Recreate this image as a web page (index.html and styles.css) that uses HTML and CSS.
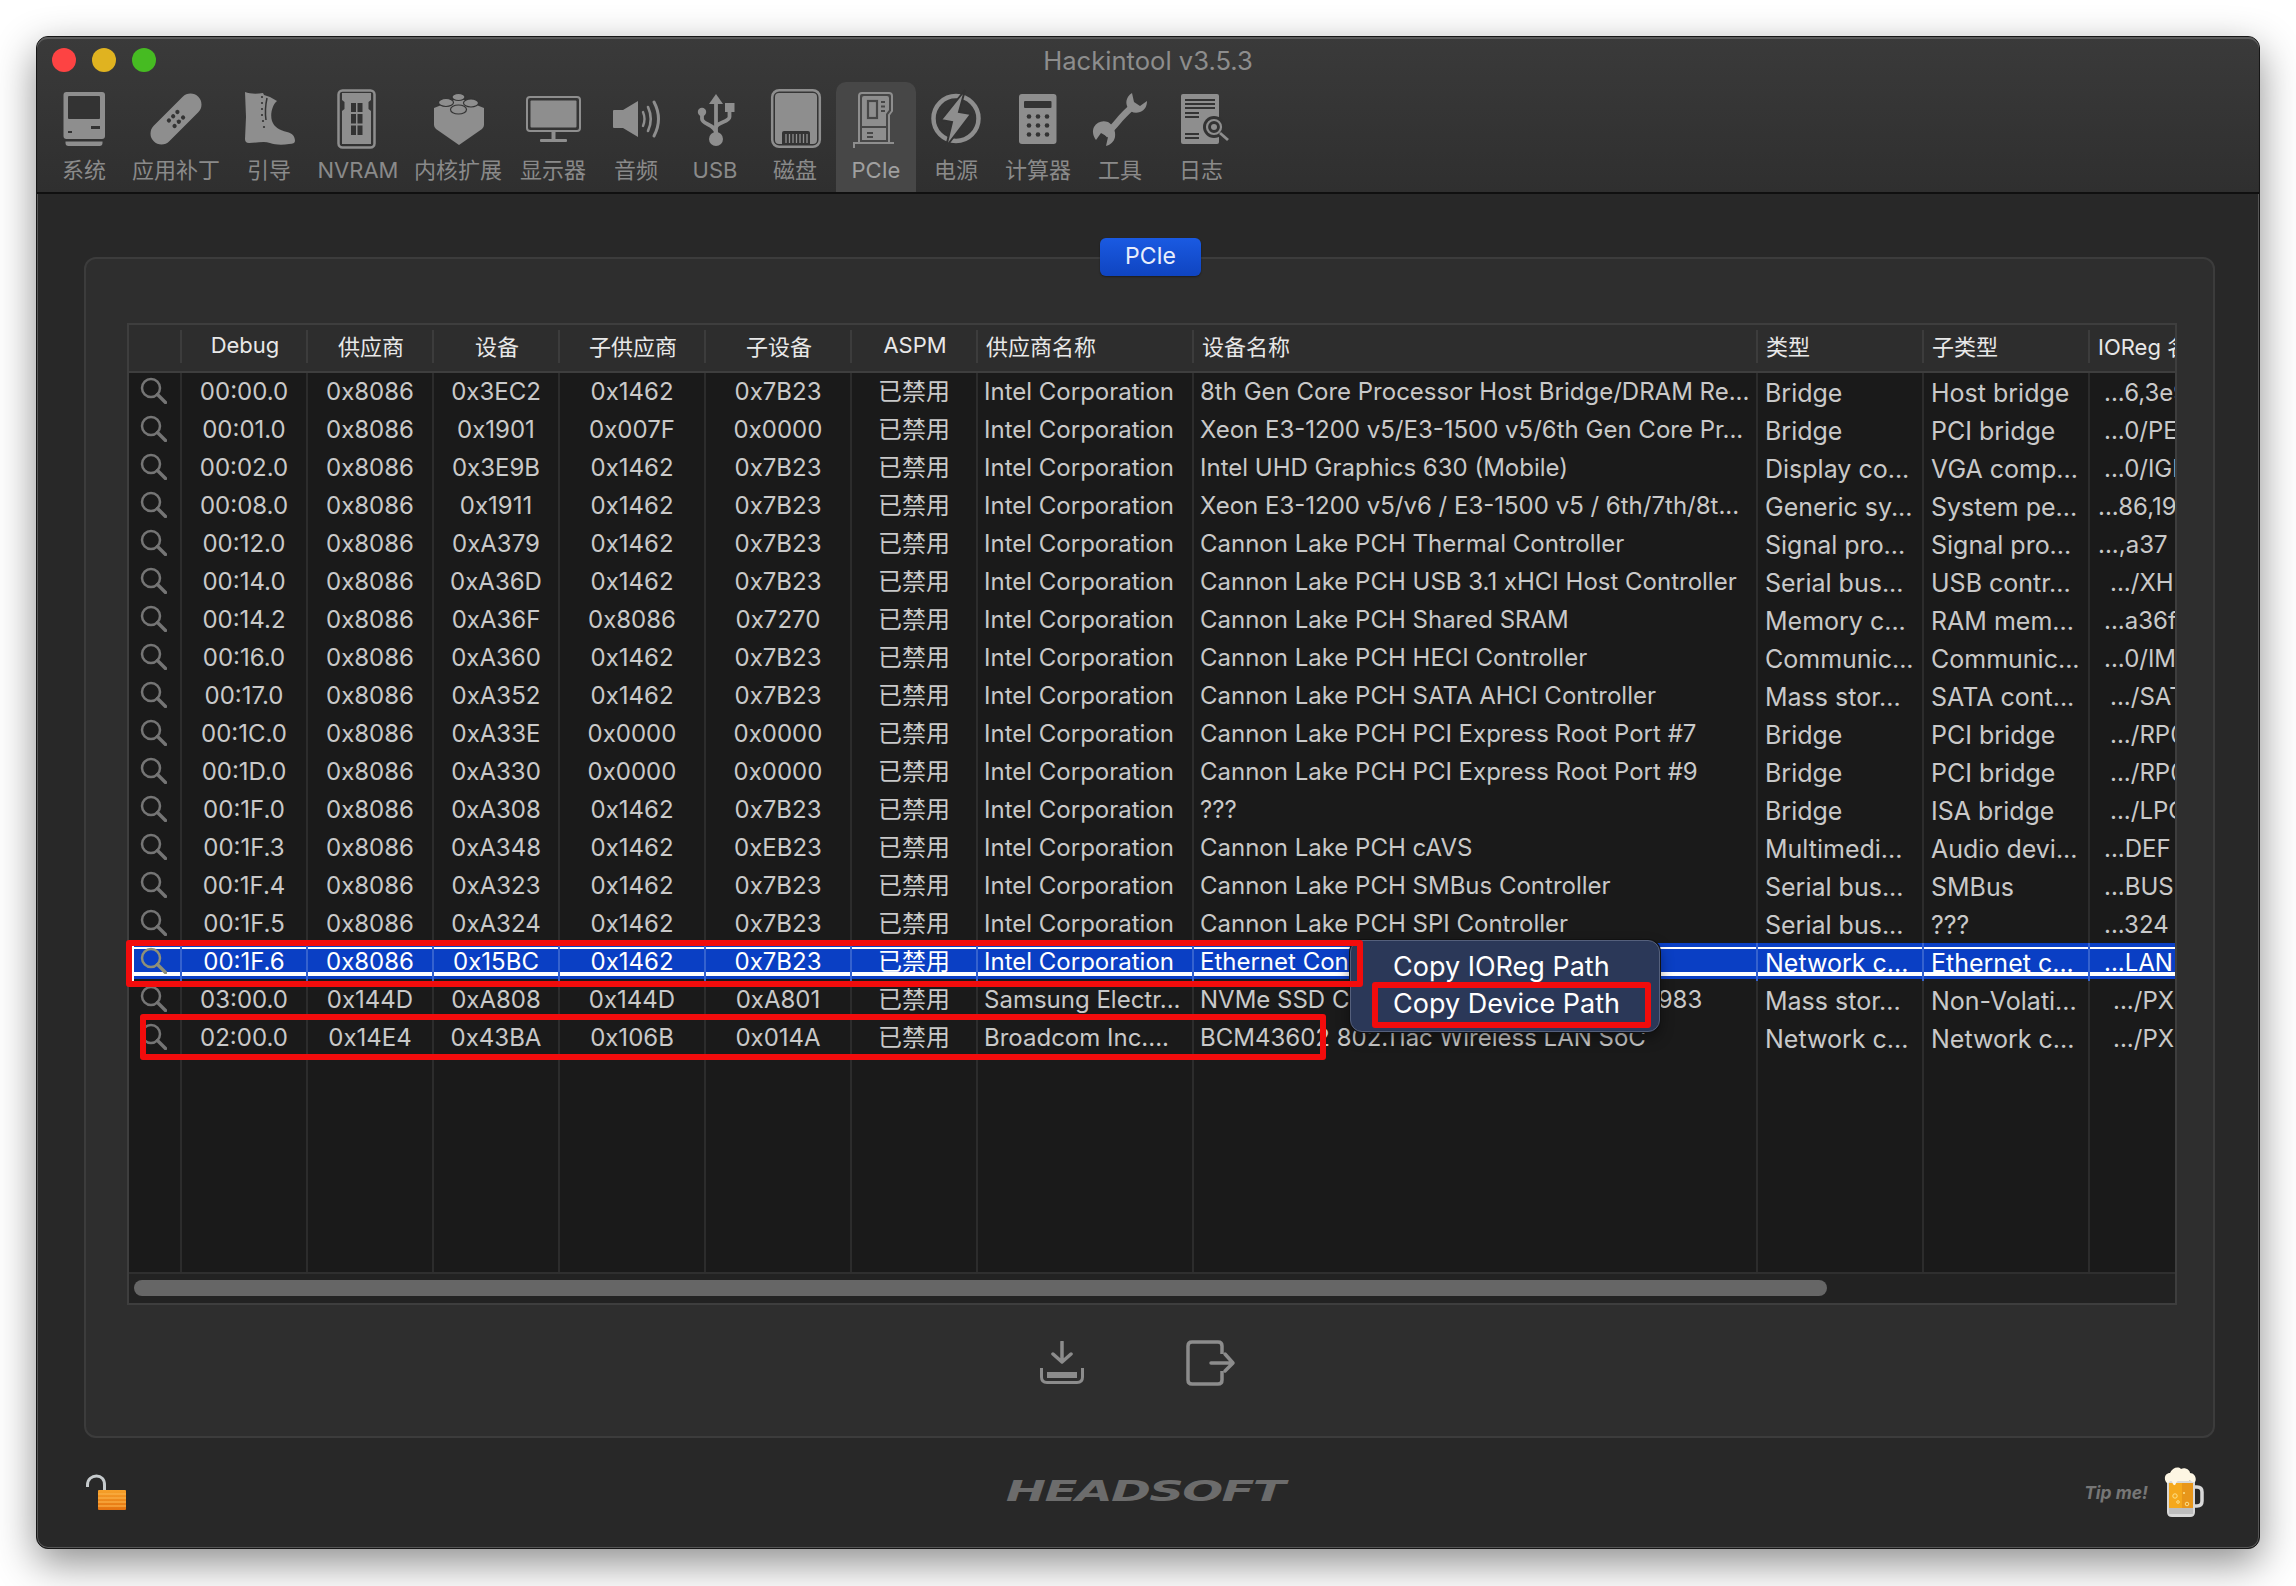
FILE: index.html
```html
<!DOCTYPE html>
<html lang="zh">
<head>
<meta charset="utf-8">
<title>Hackintool</title>
<link rel="stylesheet" href="styles.css">
</head>
<body>
<svg class="defs" width="0" height="0" aria-hidden="true">
  <symbol id="mag" viewBox="0 0 27 27">
    <circle cx="11" cy="11" r="9" fill="none" stroke="currentColor" stroke-width="2.500"/>
    <path d="M17.500 17.500 L25.500 25.500" fill="none" stroke="currentColor" stroke-width="3.400" stroke-linecap="round"/>
  </symbol>
</svg>
<div class="window">
  <header class="toolbar">
    <div class="titlerow">
      <div class="lights"><i class="light red"></i><i class="light yellow"></i><i class="light green"></i></div>
      <div class="title">Hackintool v3.5.3</div>
      <div></div>
    </div>
    <nav class="tools">
      <div class="tool">
        <svg class="ic" viewBox="0 0 64 64"><rect x="11.5" y="5" width="41.5" height="47" rx="3"/><rect class="d" x="16" y="9" width="32" height="23" rx="1"/><rect class="d" x="16" y="44" width="4" height="2"/><rect class="d" x="39" y="39" width="9" height="3"/><path d="M13.5 54.5h37v1.5a3 3 0 0 1-3 3h-31a3 3 0 0 1-3-3z"/></svg>
        <span>系统</span>
      </div>
      <div class="tool">
        <svg class="ic" viewBox="0 0 64 64"><g transform="rotate(-45 32 32)"><rect x="0.5" y="21" width="63" height="22" rx="11"/><g class="d"><circle cx="26" cy="28" r="2.1"/><circle cx="32" cy="28" r="2.1"/><circle cx="38" cy="28" r="2.1"/><circle cx="26" cy="36" r="2.1"/><circle cx="32" cy="36" r="2.1"/><circle cx="38" cy="36" r="2.1"/></g></g></svg>
        <span>应用补丁</span>
      </div>
      <div class="tool">
        <svg class="ic" viewBox="0 0 64 64"><path d="M8 5C13 7 20 7 26 6L27 8L33 10L40 14C35 18 33 28 35 34C37 40 42 43 50 45C55 46 58 49 58 54Q58 57 52 57C46 58 38 58 33 56C27 54 20 56 12 56Q8 56 8 52L9 30Z"/><path class="ds" d="M30 11C28 20 28 26 29 33" fill="none" stroke-width="1.5"/><g class="d"><circle cx="25" cy="10" r="1.1"/><circle cx="25" cy="16" r="1.1"/><circle cx="25" cy="22" r="1.1"/><circle cx="25" cy="28" r="1.1"/><circle cx="26" cy="34" r="1.1"/><circle cx="27" cy="40" r="1.1"/></g></svg>
        <span>引导</span>
      </div>
      <div class="tool">
        <svg class="ic" viewBox="0 0 64 64"><rect class="os" x="12.5" y="3.5" width="36" height="57" rx="4" fill="none" stroke-width="2.5"/><path d="M16 6H45V13L42.5 15V22L45 24V57H16V24L18.5 22V15L16 13Z"/><g class="d"><rect x="25" y="16" width="5" height="9"/><rect x="31.5" y="16" width="5" height="9"/><rect x="25" y="27" width="5" height="9.5"/><rect x="31.5" y="27" width="5" height="9.5"/><rect x="25" y="38.5" width="5" height="9.5"/><rect x="31.5" y="38.5" width="5" height="9.5"/></g></svg>
        <span>NVRAM</span>
      </div>
      <div class="tool">
        <svg class="ic" viewBox="0 0 64 64"><path d="M8 21L33 11L58 21V38Q58 40 56 42L33 58L10 42Q8 40 8 38Z"/><g class="es"><ellipse cx="32.5" cy="10" rx="6.5" ry="3.5"/><ellipse cx="20" cy="15.5" rx="7.5" ry="4"/><ellipse cx="45" cy="16" rx="7.5" ry="4"/><ellipse cx="32.5" cy="22.5" rx="8" ry="4.5"/></g></svg>
        <span>内核扩展</span>
      </div>
      <div class="tool">
        <svg class="ic" viewBox="0 0 64 64"><rect class="os" x="6" y="10" width="53" height="34" rx="3" fill="none" stroke-width="2"/><rect x="9.5" y="13.5" width="46" height="27" rx="1"/><rect x="30.5" y="45" width="4" height="7"/><rect x="19" y="52" width="27" height="3" rx="1"/></svg>
        <span>显示器</span>
      </div>
      <div class="tool">
        <svg class="ic" viewBox="0 0 64 64"><path d="M9 24Q9 23 10 23H19L34 14V50L19 41H10Q9 41 9 40Z"/><g class="os" fill="none" stroke-linecap="round"><path d="M39 25Q42 32 39 39" stroke-width="2.4"/><path d="M44 20Q49.500 32 44 44" stroke-width="2.6"/><path d="M50 15Q59 32 50 49" stroke-width="3"/></g></svg>
        <span>音频</span>
      </div>
      <div class="tool">
        <svg class="ic" viewBox="0 0 64 64"><path d="M33 7L40 17H26Z"/><circle cx="33" cy="52" r="7"/><circle cx="19" cy="25" r="4.2"/><rect x="42" y="16" width="9.500" height="9"/><g class="os" fill="none" stroke-width="3.8"><path d="M33 15V48"/><path d="M19 27V32C19 37 33 38 33 46"/><path d="M46.500 24V30C46.500 35 33 35 33 41"/></g></svg>
        <span>USB</span>
      </div>
      <div class="tool">
        <svg class="ic" viewBox="0 0 64 64"><rect class="os" x="9.200" y="3.200" width="47.600" height="56.600" rx="7" fill="none" stroke-width="2.500"/><rect x="12" y="6" width="42" height="51" rx="4"/><path class="d" d="M19 58V46Q19 44 21 44H45Q47 44 47 46V58Z"/><g class="os" fill="none" stroke-width="1.300"><path d="M23 47V56M26.500 47V56M30 47V56M33.500 47V56M37 47V56M40.500 47V56M44 47V56"/></g></svg>
        <span>磁盘</span>
      </div>
      <div class="tool active">
        <svg class="ic" viewBox="0 0 64 64"><path class="os" fill="none" stroke-width="2" d="M15 55V9Q15 6 18 6H45Q48 6 48 9V24L45 28V55"/><path class="os" fill="none" stroke-width="2" d="M10 61V56H50"/><path d="M18 11Q18 9 20 9H43Q45 9 45 11V23L42 27V39H18Z"/><path d="M18 41H42V53H18Z"/><rect class="a" x="24" y="14" width="9" height="17" fill="none" stroke-width="2.200"/><g class="a" fill="none" stroke-width="1.800"><path d="M37 15H41M37 19.500H41M37 24H41M23 46H29M23 50H29"/></g></svg>
        <span>PCIe</span>
      </div>
      <div class="tool">
        <svg class="ic" viewBox="0 0 64 64"><circle class="os" cx="32" cy="31.500" r="22.500" fill="none" stroke-width="4.500"/><path class="bolt" d="M41 3L17 33L28 35L22 60L47 27L35 25Z"/></svg>
        <span>电源</span>
      </div>
      <div class="tool">
        <svg class="ic" viewBox="0 0 64 64"><rect x="13" y="7" width="37.500" height="50" rx="3"/><rect class="d" x="18" y="14" width="27.500" height="7" rx="1"/><g class="d"><circle cx="23" cy="29.500" r="2.300"/><circle cx="32" cy="29.500" r="2.300"/><circle cx="41" cy="29.500" r="2.300"/><circle cx="23" cy="38.500" r="2.300"/><circle cx="32" cy="38.500" r="2.300"/><circle cx="41" cy="38.500" r="2.300"/><circle cx="23" cy="47.500" r="2.300"/><circle cx="32" cy="47.500" r="2.300"/><circle cx="41" cy="47.500" r="2.300"/></g></svg>
        <span>计算器</span>
      </div>
      <div class="tool">
        <svg class="ic" viewBox="0 0 64 64"><path class="os" d="M17 48C24 42 27 38 32 32S42 22 47 17" fill="none" stroke-width="6.500"/><path d="M44 6C38 10 37 16 40 21C42 25 47 27 52 25C57 23 59 19 59 14L52 19L46 15Z"/><path d="M20 35C14 33 9 35 6 40C4 44 5 49 8 53L13 46L20 50L18 59C22 58 26 55 27 50C28 44 25 38 20 35Z"/></svg>
        <span>工具</span>
      </div>
      <div class="tool">
        <svg class="ic" viewBox="0 0 64 64"><rect x="12" y="7" width="38" height="50" rx="2"/><g class="ds" fill="none" stroke-width="2"><path d="M16 13H46M16 17H46M16 21H46M16 26H30M16 30H30M16 47H30M16 51H30"/></g><circle class="d" cx="45" cy="40" r="11"/><circle class="os" cx="45" cy="40" r="7" fill="none" stroke-width="2.200"/><circle cx="45" cy="40" r="3"/><path class="os" d="M51 46L59 53" fill="none" stroke-width="2.800"/></svg>
        <span>日志</span>
      </div>
    </nav>
  </header>

  <main class="content">
    <section class="panel">
      <div class="tab">PCIe</div>
      <div class="tablebox">
        <div class="tableclip">
          <table class="grid">
            <colgroup>
              <col class="c-icon"><col class="c-id"><col class="c-id"><col class="c-id"><col class="c-id2"><col class="c-id2"><col class="c-id"><col class="c-vendor"><col class="c-dev"><col class="c-type"><col class="c-type"><col class="c-ioreg">
            </colgroup>
            <thead>
              <tr><th></th><th>Debug</th><th>供应商</th><th>设备</th><th>子供应商</th><th>子设备</th><th>ASPM</th><th class="l">供应商名称</th><th class="l">设备名称</th><th class="l">类型</th><th class="l">子类型</th><th class="l io-h">IOReg 名称</th></tr>
            </thead>
            <tbody>
              <tr><td class="m"><svg class="mag"><use href="#mag"/></svg></td><td>00:00.0</td><td>0x8086</td><td>0x3EC2</td><td>0x1462</td><td>0x7B23</td><td>已禁用</td><td class="l">Intel Corporation</td><td class="l">8th Gen Core Processor Host Bridge/DRAM Re...</td><td class="l t">Bridge</td><td class="l t">Host bridge</td><td class="io">...6,3e9b</td></tr>
              <tr><td class="m"><svg class="mag"><use href="#mag"/></svg></td><td>00:01.0</td><td>0x8086</td><td>0x1901</td><td>0x007F</td><td>0x0000</td><td>已禁用</td><td class="l">Intel Corporation</td><td class="l">Xeon E3-1200 v5/E3-1500 v5/6th Gen Core Pr...</td><td class="l t">Bridge</td><td class="l t">PCI bridge</td><td class="io">...0/PEG0</td></tr>
              <tr><td class="m"><svg class="mag"><use href="#mag"/></svg></td><td>00:02.0</td><td>0x8086</td><td>0x3E9B</td><td>0x1462</td><td>0x7B23</td><td>已禁用</td><td class="l">Intel Corporation</td><td class="l">Intel UHD Graphics 630 (Mobile)</td><td class="l t">Display co...</td><td class="l t">VGA comp...</td><td class="io">...0/IGPU</td></tr>
              <tr><td class="m"><svg class="mag"><use href="#mag"/></svg></td><td>00:08.0</td><td>0x8086</td><td>0x1911</td><td>0x1462</td><td>0x7B23</td><td>已禁用</td><td class="l">Intel Corporation</td><td class="l">Xeon E3-1200 v5/v6 / E3-1500 v5 / 6th/7th/8t...</td><td class="l t">Generic sy...</td><td class="l t">System pe...</td><td class="io io-w">...86,1911</td></tr>
              <tr><td class="m"><svg class="mag"><use href="#mag"/></svg></td><td>00:12.0</td><td>0x8086</td><td>0xA379</td><td>0x1462</td><td>0x7B23</td><td>已禁用</td><td class="l">Intel Corporation</td><td class="l">Cannon Lake PCH Thermal Controller</td><td class="l t">Signal pro...</td><td class="l t">Signal pro...</td><td class="io io-w">...,a37</td></tr>
              <tr><td class="m"><svg class="mag"><use href="#mag"/></svg></td><td>00:14.0</td><td>0x8086</td><td>0xA36D</td><td>0x1462</td><td>0x7B23</td><td>已禁用</td><td class="l">Intel Corporation</td><td class="l">Cannon Lake PCH USB 3.1 xHCI Host Controller</td><td class="l t">Serial bus...</td><td class="l t">USB contr...</td><td class="io io-s">.../XH</td></tr>
              <tr><td class="m"><svg class="mag"><use href="#mag"/></svg></td><td>00:14.2</td><td>0x8086</td><td>0xA36F</td><td>0x8086</td><td>0x7270</td><td>已禁用</td><td class="l">Intel Corporation</td><td class="l">Cannon Lake PCH Shared SRAM</td><td class="l t">Memory c...</td><td class="l t">RAM mem...</td><td class="io">...a36f</td></tr>
              <tr><td class="m"><svg class="mag"><use href="#mag"/></svg></td><td>00:16.0</td><td>0x8086</td><td>0xA360</td><td>0x1462</td><td>0x7B23</td><td>已禁用</td><td class="l">Intel Corporation</td><td class="l">Cannon Lake PCH HECI Controller</td><td class="l t">Communic...</td><td class="l t">Communic...</td><td class="io">...0/IM</td></tr>
              <tr><td class="m"><svg class="mag"><use href="#mag"/></svg></td><td>00:17.0</td><td>0x8086</td><td>0xA352</td><td>0x1462</td><td>0x7B23</td><td>已禁用</td><td class="l">Intel Corporation</td><td class="l">Cannon Lake PCH SATA AHCI Controller</td><td class="l t">Mass stor...</td><td class="l t">SATA cont...</td><td class="io io-s">.../SAT</td></tr>
              <tr><td class="m"><svg class="mag"><use href="#mag"/></svg></td><td>00:1C.0</td><td>0x8086</td><td>0xA33E</td><td>0x0000</td><td>0x0000</td><td>已禁用</td><td class="l">Intel Corporation</td><td class="l">Cannon Lake PCH PCI Express Root Port #7</td><td class="l t">Bridge</td><td class="l t">PCI bridge</td><td class="io io-s">.../RP0</td></tr>
              <tr><td class="m"><svg class="mag"><use href="#mag"/></svg></td><td>00:1D.0</td><td>0x8086</td><td>0xA330</td><td>0x0000</td><td>0x0000</td><td>已禁用</td><td class="l">Intel Corporation</td><td class="l">Cannon Lake PCH PCI Express Root Port #9</td><td class="l t">Bridge</td><td class="l t">PCI bridge</td><td class="io io-s">.../RP0</td></tr>
              <tr><td class="m"><svg class="mag"><use href="#mag"/></svg></td><td>00:1F.0</td><td>0x8086</td><td>0xA308</td><td>0x1462</td><td>0x7B23</td><td>已禁用</td><td class="l">Intel Corporation</td><td class="l">???</td><td class="l t">Bridge</td><td class="l t">ISA bridge</td><td class="io io-s">.../LPC</td></tr>
              <tr><td class="m"><svg class="mag"><use href="#mag"/></svg></td><td>00:1F.3</td><td>0x8086</td><td>0xA348</td><td>0x1462</td><td>0xEB23</td><td>已禁用</td><td class="l">Intel Corporation</td><td class="l">Cannon Lake PCH cAVS</td><td class="l t">Multimedi...</td><td class="l t">Audio devi...</td><td class="io">...DEF</td></tr>
              <tr><td class="m"><svg class="mag"><use href="#mag"/></svg></td><td>00:1F.4</td><td>0x8086</td><td>0xA323</td><td>0x1462</td><td>0x7B23</td><td>已禁用</td><td class="l">Intel Corporation</td><td class="l">Cannon Lake PCH SMBus Controller</td><td class="l t">Serial bus...</td><td class="l t">SMBus</td><td class="io">...BUS</td></tr>
              <tr><td class="m"><svg class="mag"><use href="#mag"/></svg></td><td>00:1F.5</td><td>0x8086</td><td>0xA324</td><td>0x1462</td><td>0x7B23</td><td>已禁用</td><td class="l">Intel Corporation</td><td class="l">Cannon Lake PCH SPI Controller</td><td class="l t">Serial bus...</td><td class="l t">???</td><td class="io">...324</td></tr>
              <tr class="sel"><td class="m"><svg class="mag"><use href="#mag"/></svg></td><td>00:1F.6</td><td>0x8086</td><td>0x15BC</td><td>0x1462</td><td>0x7B23</td><td>已禁用</td><td class="l">Intel Corporation</td><td class="l">Ethernet Connection (7) I219-V</td><td class="l t">Network c...</td><td class="l t">Ethernet c...</td><td class="io">...LAN</td></tr>
              <tr><td class="m"><svg class="mag"><use href="#mag"/></svg></td><td>03:00.0</td><td>0x144D</td><td>0xA808</td><td>0x144D</td><td>0xA801</td><td>已禁用</td><td class="l">Samsung Electr...</td><td class="l">NVMe SSD Controller SM981/PM981/PM983</td><td class="l t">Mass stor...</td><td class="l t">Non-Volati...</td><td class="io io-x">.../PX</td></tr>
              <tr><td class="m"><svg class="mag"><use href="#mag"/></svg></td><td>02:00.0</td><td>0x14E4</td><td>0x43BA</td><td>0x106B</td><td>0x014A</td><td>已禁用</td><td class="l">Broadcom Inc....</td><td class="l">BCM43602 802.11ac Wireless LAN SoC</td><td class="l t">Network c...</td><td class="l t">Network c...</td><td class="io io-x">.../PX</td></tr>
              <tr class="filler"><td></td><td></td><td></td><td></td><td></td><td></td><td></td><td></td><td></td><td></td><td></td><td></td></tr>
            </tbody>
          </table>
        </div>
        <div class="hscroll"><div class="thumb"></div></div>
      </div>
      <div class="actions">
        <svg class="act" width="44" height="44" viewBox="0 0 44 44"><path d="M22 1V20M13 13L22 21L31 13" fill="none" stroke-width="3.500" stroke-linecap="round" stroke-linejoin="round"/><path d="M1.500 27V36Q1.500 41.500 7 41.500H37Q42.500 41.500 42.500 36V27" fill="none" stroke-width="3"/><rect class="f" x="7" y="31" width="30" height="6"/></svg>
        <svg class="act" width="50" height="46" viewBox="0 0 50 46"><path d="M36 14V6Q36 2 32 2H6Q2 2 2 6V40Q2 44 6 44H32Q36 44 36 40V31" fill="none" stroke-width="3.500"/><path d="M25 23H46M39 14L47 23L39 31" fill="none" stroke-width="3.500" stroke-linecap="round" stroke-linejoin="round"/></svg>
      </div>
    </section>
    <footer class="foot">
      <svg class="lock" width="40" height="36" viewBox="0 0 40 36">
        <defs><linearGradient id="st" x1="0" y1="0" x2="0" y2="1"><stop offset="0" stop-color="#f6a12a"/><stop offset="1" stop-color="#e4720f"/></linearGradient></defs>
        <path d="M1.500 13V11C1.500 5 6 2 10.500 2S18.500 5 18.500 11V17" fill="none" stroke="#c6cbcd" stroke-width="3"/>
        <rect x="12" y="16" width="28" height="20" rx="1" fill="url(#st)"/>
        <path d="M12 20H40M12 24H40M12 28H40M12 32H40" stroke="#fbb24a" stroke-width="1.400" opacity=".8"/>
      </svg>
      <div class="logo">HEADSOFT</div>
      <div class="tip">
        <span class="tiptext">Tip me!</span>
        <svg class="beer" width="40" height="52" viewBox="0 0 40 52">
          <path d="M28 21H33Q38 21 38 26V35Q38 40 33 40H28" fill="none" stroke="#d9d9d9" stroke-width="3.500"/>
          <path d="M3 15H31V46Q31 51 26 51H8Q3 51 3 46Z" fill="#d8d8d8"/>
          <path d="M5 17H29V42H5Z" fill="#f5a81c"/>
          <path d="M18 17H29V42H18Z" fill="#e8961a"/>
          <path d="M5 42H29V48H5Z" fill="#bdbdbd"/>
          <circle cx="11" cy="30" r="2.200" fill="none" stroke="#fde08a" stroke-width="1"/><circle cx="14" cy="36" r="1.300" fill="none" stroke="#fde08a" stroke-width="1"/><circle cx="23" cy="38" r="1.800" fill="none" stroke="#fde08a" stroke-width="1"/><circle cx="20" cy="27" r="1" fill="#fde08a"/>
          <path d="M3 17C-1 13 1 7 6 7C8 2 14 0 17 3C21 1 26 4 26 7C31 7 33 13 31 16C29 17 27 14 25 15H14C12 15 12 20 10 19C8 18 9 15 7 15C5 15 5 18 3 17Z" fill="#fdf6e3"/>
        </svg>
      </div>
    </footer>
  </main>

  <div class="popup">
    <div class="popitem">Copy IOReg Path</div>
    <div class="popitem">Copy Device Path</div>
  </div>
  <div class="mark mark-row"></div>
  <div class="mark mark-row2"></div>
  <div class="mark mark-menu"></div>
</div>
</body>
</html>
```

FILE: styles.css
```css
* { box-sizing: border-box; }
html, body { margin: 0; height: 1586px; overflow: hidden; }
body {
  background: #fff;
  padding: 36px;
  font-family: Inter, "Noto Sans CJK SC", sans-serif;
}
.defs { position: absolute; }

.window {
  position: relative;
  width: 2224px;
  height: 1513px;
  border: 1px solid #161616;
  border-radius: 12px;
  background: #282828;
  box-shadow: inset 0 0 0 1px #565656, 0 14px 40px rgba(0, 0, 0, .45);
  display: flex;
  flex-direction: column;
  overflow: visible;
}

/* toolbar */
.toolbar {
  height: 157px;
  border-bottom: 2px solid #101010;
  background: linear-gradient(#3a3a3a, #2f2f2f);
  border-radius: 11px 11px 0 0;
  box-shadow: inset 0 2px 0 #5c5c5c;
  flex: none;
}
.titlerow {
  height: 45px;
  display: grid;
  grid-template-columns: 1fr auto 1fr;
  align-items: center;
  padding-top: 1px;
}
.lights { display: flex; gap: 16px; padding-left: 15px; }
.light { width: 24px; height: 24px; border-radius: 50%; display: block; }
.red { background: #fd4343; }
.yellow { background: #e0b320; }
.green { background: #46bb22; }
.title { color: #8d8d8d; font-size: 25.600px; line-height: 30px; padding-top: 2px; }

.tools {
  display: grid;
  grid-template-columns: 80px 104px 82px 96px 104px 86px 80px 78px 82px 80px 80px 84px 80px 82px;
  padding-left: 7px;
  height: 110px;
}
.tool {
  display: flex;
  flex-direction: column;
  align-items: center;
  padding-top: 5px;
  color: #8a8a8a;
  font-size: 22px;
  white-space: nowrap;
}
.tool span { line-height: 30px; margin-top: 4px; }
.tool.active {
  background: #474747;
  border-radius: 10px 10px 0 0;
  color: #a0a0a0;
}
.ic { width: 64px; height: 64px; display: block; fill: #8e8e8e; overflow: hidden; flex: none; }
.ic .d { fill: #333; }
.ic .ds { stroke: #333; }
.ic .os { stroke: #8e8e8e; }
.ic .es ellipse { fill: #8e8e8e; stroke: #333; stroke-width: 1.2; }
.ic .a { stroke: #474747; }
.ic .bolt { stroke: #333; stroke-width: 2; }

/* content */
.content {
  flex: 1;
  display: flex;
  flex-direction: column;
  padding: 63px 44px 0 47px;
}
.panel {
  height: 1181px;
  border: 2px solid #3c3c3c;
  border-radius: 12px;
  background: #2e2e2e;
  display: flex;
  flex-direction: column;
  flex: none;
}
.tab {
  align-self: center;
  margin-top: -21px;
  width: 101px;
  height: 38px;
  border-radius: 6px;
  background: linear-gradient(#1a5ae2, #0f44c0);
  color: #e8eefc;
  font-size: 23px;
  line-height: 36px;
  text-align: center;
  box-shadow: 0 1px 2px rgba(0, 0, 0, .4);
  margin-left: 2px;
}
.tablebox {
  margin: 47px 36px 0 41px;
  height: 982px;
  border: 2px solid #3e3e3e;
  background: #232323;
  flex: none;
  display: flex;
  flex-direction: column;
}
.tableclip { overflow: hidden; height: 947px; flex: none; }
.grid {
  border-collapse: separate;
  border-spacing: 0;
  table-layout: fixed;
  width: 2081px;
  font-size: 24px;
  color: #c9c9c9;
}
.c-icon { width: 53px; }
.c-id { width: 126px; }
.c-id2 { width: 146px; }
.c-vendor { width: 216px; }
.c-dev { width: 564px; }
.c-type { width: 166px; }
.c-ioreg { width: 120px; }

.grid th {
  height: 48px;
  padding: 0 0 6px;
  background: #2d2d2d;
  border-bottom: 2px solid #3e3e3e;
  color: #e8e8e8;
  font-weight: 400;
  font-size: 22px;
  white-space: nowrap;
  overflow: hidden;
  background-image: linear-gradient(#3c3c3c, #3c3c3c);
  background-size: 2px 33px;
  background-position: right 5px;
  background-repeat: no-repeat;
}
.grid th.l { text-align: left; padding-left: 8px; }
.grid th.io-h { background-image: none; padding-left: 8px; }
.grid td {
  height: 38px;
  padding: 0;
  background: #1a1a1a;
  border-right: 2px solid #2c2c2c;
  text-align: center;
  white-space: nowrap;
  overflow: hidden;
  line-height: 38px;
}
.grid td.l { text-align: left; padding-left: 6px; }
.grid td.t { padding-top: 2px; padding-left: 7px; line-height: 36px; font-size: 25px; }
.grid td.m { padding: 0 0 4px; line-height: 34px; }
.grid td.io { text-align: left; padding-left: 14px; padding-top: 2px; line-height: 36px; border-right: 0; }
.grid td.io-s { padding-left: 20px; }
.grid td.io-w { padding-left: 8px; }
.grid td.io-x { padding-left: 23px; }
.mag { width: 27px; height: 27px; display: block; margin-left: 11px; color: #757575; }
.filler td { height: 215px; }

.sel td, .sel td.io {
  background: linear-gradient(#0a3fc4 0 4px, #fff 4px 6px, #0a3fc4 6px 29px, #fff 29px 33px, #0a3fc4 33px 36px, #1a1a1a 36px);
  border-right-color: #3562cf;
  color: #fff;
}
.sel td.m {
  background:
    linear-gradient(90deg, #0a3fc4 0 3px, #fff 3px 5px, transparent 5px),
    linear-gradient(#0a3fc4 0 4px, #fff 4px 6px, #0a3fc4 6px 29px, #fff 29px 33px, #0a3fc4 33px 36px, #1a1a1a 36px);
}
.sel .mag { color: #8f9078; }

.hscroll { flex: 1; border-top: 2px solid #2f2f2f; padding: 6px 0 0 5px; background: #222; }
.thumb { width: 1693px; height: 16px; border-radius: 8px; background: #666; }

.actions {
  flex: 1;
  display: flex;
  align-items: center;
  justify-content: center;
  gap: 102px;
  padding: 0 24px 16px 0;
}
.act { stroke: #8c8c8c; flex: none; }
.act .f { fill: #8c8c8c; stroke: none; }

/* footer */
.foot {
  height: 108px;
  display: grid;
  grid-template-columns: 1fr auto 1fr;
  align-items: center;
  margin: 0 11px 0 2px;
  flex: none;
}
.lock { display: block; }
.logo {
  color: #6c6c6c;
  font: italic 700 28px/30px "DejaVu Sans", sans-serif;
  transform: scaleX(1.72);
  padding: 0 54px;
  letter-spacing: -1px;
}
.tip { display: flex; align-items: center; justify-content: flex-end; gap: 16px; }
.tiptext { color: #767676; font-size: 17.500px; font-weight: 700; font-style: italic; white-space: nowrap; }
.beer { display: block; }

/* context menu and annotation frames */
.popup {
  position: absolute;
  left: 1313px;
  top: 903px;
  width: 310px;
  height: 92px;
  padding-top: 7px;
  border-radius: 12px;
  background: #2b3858;
  border: 1px solid #55607c;
  box-shadow: 0 0 0 1px #111, 0 6px 14px rgba(0, 0, 0, .4);
}
.popitem {
  padding-left: 42px;
  height: 37px;
  line-height: 37px;
  color: #fff;
  font-size: 27px;
  white-space: nowrap;
}
.mark { position: absolute; border: 6px solid #f20c0c; border-radius: 3px; }
.mark-row { left: 89px; top: 903px; width: 1237px; height: 47px; }
.mark-row2 { left: 103px; top: 977px; width: 1186px; height: 46px; }
.mark-menu { left: 1335px; top: 945px; width: 279px; height: 46px; }
```
